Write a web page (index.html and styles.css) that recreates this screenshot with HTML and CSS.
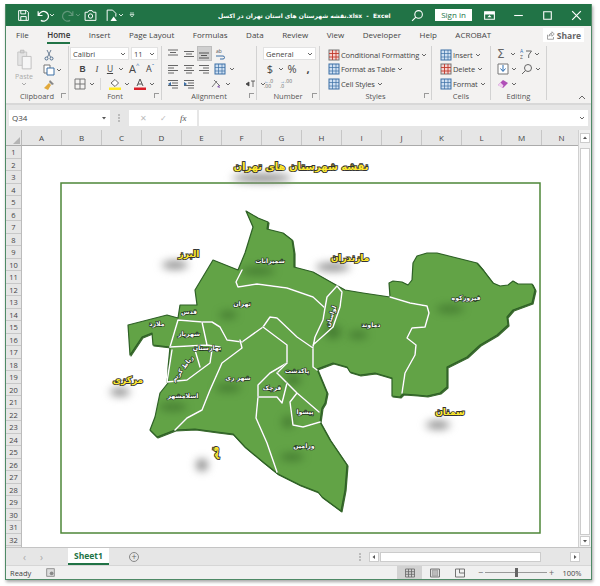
FILE: index.html
```html
<!DOCTYPE html>
<html lang="en">
<head>
<meta charset="utf-8">
<title>Excel</title>
<link rel="stylesheet" href="styles.css">
</head>
<body>
<svg class="defs" width="0" height="0">
  <defs>
    <symbol id="caret" viewBox="0 0 6 6"><path d="M1 2l2 2 2-2" fill="none" stroke="#666" stroke-width="1"/></symbol>
    <symbol id="lines-l" viewBox="0 0 12 12"><path d="M1 2.500h10M1 5h6M1 7.500h10M1 10h6" stroke="#666" fill="none"/></symbol>
    <symbol id="lines-c" viewBox="0 0 12 12"><path d="M1 2.500h10M3 5h6M1 7.500h10M3 10h6" stroke="#666" fill="none"/></symbol>
    <symbol id="lines-r" viewBox="0 0 12 12"><path d="M1 2.500h10M5 5h6M1 7.500h10M5 10h6" stroke="#666" fill="none"/></symbol>
    <symbol id="top" viewBox="0 0 12 12"><path d="M1 2h10M3 4.500h6M1 7h10" stroke="#666" fill="none"/></symbol>
    <symbol id="mid" viewBox="0 0 12 12"><path d="M1 3.500h10M3 6h6M1 8.500h10" stroke="#666" fill="none"/></symbol>
    <symbol id="bot" viewBox="0 0 12 12"><path d="M1 5h10M3 7.500h6M1 10h10" stroke="#555" fill="none"/></symbol>
    <symbol id="table" viewBox="0 0 12 12"><rect x="1" y="1" width="10" height="10" fill="#cfe0f2" stroke="#3a6ea5"/><path d="M1 4.500h10M1 8h10M4.500 1v10M8 1v10" stroke="#3a6ea5" stroke-width=".7"/></symbol>
    <symbol id="cond" viewBox="0 0 12 12"><rect x="1" y="1" width="10" height="10" fill="#f7d3d0" stroke="#777"/><path d="M1 4.500h10M1 8h10M4.500 1v10M8 1v10" stroke="#c0392b" stroke-width=".9"/></symbol>
    <symbol id="brush" viewBox="0 0 12 12"><path d="M7 1l4 4-2 1-3-3z" fill="#888"/><path d="M6 4l2 2-3 5-4-2z" fill="#e2a93b"/></symbol>
  </defs>
</svg>
<div class="window">

  <header class="titlebar">
    <div class="qat">
      <svg class="qi" viewBox="0 0 12 12"><path d="M1.500 1.500h7.500l1.500 1.500v7.500h-9zM3.500 1.500v3h4.500v-3M3.500 10.500v-3.500h5v3.500" fill="none" stroke="#fff" stroke-width=".9"/></svg>
      <svg class="qi undo" viewBox="0 0 12 12"><path d="M2 2v4h4M2.500 6a4.500 4.500 0 1 1 2 4.500" fill="none" stroke="#fff" stroke-width="1.100"/></svg>
      <svg class="cr" viewBox="0 0 6 6"><path d="M1 2l2 2 2-2" fill="none" stroke="#dcebe2"/></svg>
      <svg class="qi redo" viewBox="0 0 12 12"><path d="M10 2v4h-4M9.500 6a4.500 4.500 0 1 0-2 4.500" fill="none" stroke="#5f9779" stroke-width="1.100"/></svg>
      <svg class="cr" viewBox="0 0 6 6"><path d="M1 2l2 2 2-2" fill="none" stroke="#5f9779"/></svg>
      <svg class="qi cam" viewBox="0 0 12 12"><path d="M1 3h2.500l1-1.500h3l1 1.500h2.500v7.500h-10z" fill="none" stroke="#fff" stroke-width=".9"/><circle cx="6" cy="6.500" r="2" fill="none" stroke="#fff" stroke-width=".9"/></svg>
      <svg class="qi doc" viewBox="0 0 12 12"><path d="M2 11v-10h5l3 3v3" fill="none" stroke="#fff" stroke-width=".9"/><path d="M5 11l3-4 3 4z" fill="#fff"/></svg>
      <svg class="cr" viewBox="0 0 6 6"><path d="M1 2l2 2 2-2" fill="none" stroke="#dcebe2"/></svg>
      <svg class="cr custom" viewBox="0 0 6 6"><path d="M1 1h4M1 2.500l2 2.500 2-2.500z" fill="none" stroke="#dcebe2" stroke-width=".8"/></svg>
    </div>
    <div class="doc-title">نقشه شهرستان های استان تهران در اکسل.xlsx&nbsp; - &nbsp;Excel</div>
    <div class="title-right">
      <svg class="qi search" viewBox="0 0 12 12"><circle cx="7" cy="5" r="3.500" fill="none" stroke="#fff"/><path d="M4.500 7.500l-3.500 3.500" stroke="#fff"/></svg>
      <button class="signin">Sign in</button>
      <svg class="qi display" viewBox="0 0 12 12"><path d="M1.500 2.500h9v7h-9z" fill="none" stroke="#fff"/><path d="M1.500 2.500h9v2.500h-9zM6 5.500l-2 2h4z" fill="#fff"/></svg>
      <svg class="qi wb" viewBox="0 0 12 12"><path d="M2 6h8" stroke="#fff"/></svg>
      <svg class="qi wb" viewBox="0 0 12 12"><path d="M2.500 2.500h7v7h-7z" fill="none" stroke="#fff"/></svg>
      <svg class="qi wb" viewBox="0 0 12 12"><path d="M2 2l8 8M10 2l-8 8" stroke="#fff" stroke-width="1.100"/></svg>
    </div>
  </header>

  <nav class="tabs">
    <span class="tab">File</span>
    <span class="tab active">Home</span>
    <span class="tab">Insert</span>
    <span class="tab">Page Layout</span>
    <span class="tab">Formulas</span>
    <span class="tab">Data</span>
    <span class="tab">Review</span>
    <span class="tab">View</span>
    <span class="tab">Developer</span>
    <span class="tab">Help</span>
    <span class="tab">ACROBAT</span>
    <button class="share"><svg class="sh" viewBox="0 0 12 12"><path d="M2 5v6h8v-3M4 7c0-3 2-4 4-4V1l3 3-3 3V5c-2 0-3 .5-4 2z" fill="none" stroke="#777" stroke-width=".9"/></svg>Share</button>
  </nav>

  <section class="ribbon">
    <div class="group g-clip">
      <div class="gbody clip">
        <div class="paste">
          <svg class="paste-ic" viewBox="0 0 18 24"><path d="M2 3h10v15H2z" fill="#e4e4e4" stroke="#c4c4c4"/><path d="M5 1h4v3H5z" fill="#d4d4d4" stroke="#bbb"/><path d="M7 8h10v14H7z" fill="#f6f6f6" stroke="#bbb"/></svg>
          <span class="paste-t">Paste</span>
          <svg class="cr" viewBox="0 0 6 6"><path d="M1 2l2 2 2-2" fill="none" stroke="#aaa"/></svg>
        </div>
        <div class="clip-tools">
          <svg class="ic" viewBox="0 0 12 12"><path d="M4 1l3.500 7M8 1l-3.500 7" stroke="#6b7f96" fill="none"/><circle cx="3.500" cy="9.500" r="1.500" fill="none" stroke="#4d6c8e"/><circle cx="8.500" cy="9.500" r="1.500" fill="none" stroke="#4d6c8e"/></svg>
          <div class="ir"><svg class="ic" viewBox="0 0 12 12"><path d="M1 1h6v8H1z" fill="#fff" stroke="#777"/><path d="M4 4h7v7H4z" fill="#fff" stroke="#3a6ea5"/></svg><svg class="cr" viewBox="0 0 6 6"><use href="#caret"/></svg></div>
          <svg class="ic" viewBox="0 0 12 12"><use href="#brush"/></svg>
        </div>
      </div>
      <div class="glabel">Clipboard</div>
      <span class="launch"></span>
    </div>

    <div class="group g-font">
      <div class="gbody">
        <div class="row r-combos">
          <div class="combo c-font"><span>Calibri</span><svg class="cr" viewBox="0 0 6 6"><use href="#caret"/></svg></div>
          <div class="combo c-size"><span>11</span><svg class="cr" viewBox="0 0 6 6"><use href="#caret"/></svg></div>
        </div>
        <div class="row r-fmt">
          <b class="fb">B</b><i class="fi">I</i><u class="fu">U</u><svg class="cr" viewBox="0 0 6 6"><use href="#caret"/></svg>
          <span class="fa big">A<sup>^</sup></span><span class="fa small">A<sup>ˇ</sup></span>
        </div>
        <div class="row r-col">
          <svg class="ic" viewBox="0 0 12 12"><path d="M1 1h10v10H1zM6 1v10M1 6h10" fill="none" stroke="#777"/></svg><svg class="cr" viewBox="0 0 6 6"><use href="#caret"/></svg>
          <span class="sep"></span>
          <svg class="ic" viewBox="0 0 12 12"><path d="M2 5l4-3.500 3.500 3.500-3.500 3.500z" fill="#fff" stroke="#666"/><rect x="0" y="9.500" width="12" height="2.500" fill="#ffe91f"/></svg><svg class="cr" viewBox="0 0 6 6"><use href="#caret"/></svg>
          <svg class="ic red" viewBox="0 0 12 12"><path d="M3 8l3-7 3 7M4 6h4" fill="none" stroke="#555"/><rect x="0" y="9.500" width="12" height="2.500" fill="#d9202a"/></svg><svg class="cr" viewBox="0 0 6 6"><use href="#caret"/></svg>
        </div>
      </div>
      <div class="glabel">Font</div>
      <span class="launch"></span>
    </div>

    <div class="group g-align">
      <div class="gbody">
        <div class="row r-al">
          <svg class="ic" viewBox="0 0 12 12"><use href="#top"/></svg>
          <svg class="ic" viewBox="0 0 12 12"><use href="#mid"/></svg>
          <span class="sel"><svg class="ic" viewBox="0 0 12 12"><use href="#bot"/></svg></span>
          <svg class="ic" viewBox="0 0 12 12"><text x="2" y="5" class="wrap-a">ab</text><path d="M2 8h7a1.500 1.500 0 0 1 0 3H6" fill="none" stroke="#3a6ea5"/></svg>
        </div>
        <div class="row r-al">
          <svg class="ic" viewBox="0 0 12 12"><use href="#lines-l"/></svg>
          <svg class="ic" viewBox="0 0 12 12"><use href="#lines-c"/></svg>
          <svg class="ic" viewBox="0 0 12 12"><use href="#lines-r"/></svg>
          <svg class="ic" viewBox="0 0 12 12"><use href="#table"/></svg><svg class="cr" viewBox="0 0 6 6"><use href="#caret"/></svg>
        </div>
        <div class="row r-al">
          <svg class="ic" viewBox="0 0 12 12"><use href="#lines-r"/><path d="M4 4L1 6l3 2z" fill="#3a6ea5"/></svg>
          <svg class="ic" viewBox="0 0 12 12"><use href="#lines-r"/><path d="M1 4l3 2-3 2z" fill="#3a6ea5"/></svg>
          <span class="sep"></span>
          <svg class="ic" viewBox="0 0 12 12"><path d="M2 9l5-6M4 2l6 6" stroke="#777" fill="none"/><path d="M7 9l3 1-1-3z" fill="#8a5fb0"/></svg><svg class="cr" viewBox="0 0 6 6"><use href="#caret"/></svg>
          <svg class="ic rtl" viewBox="0 0 12 12"><path d="M6 3h4M8 3v6M4 4L1 6l3 2z" stroke="#444" fill="#444" stroke-width=".8"/></svg><svg class="cr" viewBox="0 0 6 6"><use href="#caret"/></svg>
        </div>
      </div>
      <div class="glabel">Alignment</div>
      <span class="launch"></span>
    </div>

    <div class="group g-num">
      <div class="gbody">
        <div class="row r-combos"><div class="combo c-gen"><span>General</span><svg class="cr" viewBox="0 0 6 6"><use href="#caret"/></svg></div></div>
        <div class="row r-num"><span class="sym">$</span><svg class="cr" viewBox="0 0 6 6"><use href="#caret"/></svg><span class="sym">%</span><span class="sym comma">,</span></div>
        <div class="row r-dec">
          <span class="dec"><em>←</em>.0<br>.00</span>
          <span class="dec"><em>→</em>.00<br>.0</span>
        </div>
      </div>
      <div class="glabel">Number</div>
      <span class="launch"></span>
    </div>

    <div class="group g-styles">
      <div class="gbody list">
        <div class="li"><svg class="ic" viewBox="0 0 12 12"><use href="#cond"/></svg><span>Conditional Formatting</span><svg class="cr" viewBox="0 0 6 6"><use href="#caret"/></svg></div>
        <div class="li"><svg class="ic" viewBox="0 0 12 12"><use href="#table"/></svg><span>Format as Table</span><svg class="cr" viewBox="0 0 6 6"><use href="#caret"/></svg></div>
        <div class="li"><svg class="ic" viewBox="0 0 12 12"><use href="#table"/></svg><span>Cell Styles</span><svg class="cr" viewBox="0 0 6 6"><use href="#caret"/></svg></div>
      </div>
      <div class="glabel">Styles</div>
      <span class="launch"></span>
    </div>

    <div class="group g-cells">
      <div class="gbody list">
        <div class="li"><svg class="ic" viewBox="0 0 12 12"><use href="#table"/></svg><span>Insert</span><svg class="cr" viewBox="0 0 6 6"><use href="#caret"/></svg></div>
        <div class="li"><svg class="ic" viewBox="0 0 12 12"><use href="#cond"/></svg><span>Delete</span><svg class="cr" viewBox="0 0 6 6"><use href="#caret"/></svg></div>
        <div class="li"><svg class="ic" viewBox="0 0 12 12"><use href="#table"/></svg><span>Format</span><svg class="cr" viewBox="0 0 6 6"><use href="#caret"/></svg></div>
      </div>
      <div class="glabel">Cells</div>
    </div>

    <div class="group g-edit">
      <div class="gbody">
        <div class="row r-ed"><span class="sigma">Σ</span><svg class="cr" viewBox="0 0 6 6"><use href="#caret"/></svg>
          <svg class="ic" viewBox="0 0 12 12"><text x="0" y="5" class="az">A</text><text x="0" y="11" class="az z">Z</text><path d="M6 3h5.500L8.700 7v3" fill="none" stroke="#666"/></svg><svg class="cr" viewBox="0 0 6 6"><use href="#caret"/></svg></div>
        <div class="row r-ed"><svg class="ic" viewBox="0 0 12 12"><path d="M1 1h10v10H1z" fill="#fff" stroke="#777"/><path d="M6 2v6M3.500 5.500L6 8.500l2.500-3" fill="none" stroke="#2b6cb0"/></svg><svg class="cr" viewBox="0 0 6 6"><use href="#caret"/></svg>
          <svg class="ic" viewBox="0 0 12 12"><circle cx="7" cy="5" r="3.500" fill="none" stroke="#666"/><path d="M4.500 7.500L1 11" stroke="#666"/></svg><svg class="cr" viewBox="0 0 6 6"><use href="#caret"/></svg></div>
        <div class="row r-ed"><svg class="ic" viewBox="0 0 12 12"><path d="M1 7l5-5 5 3-5 5z" fill="#b04fb8"/><path d="M1 7l2.500-2.500 3 3L5 10z" fill="#f0d0f0"/></svg><svg class="cr" viewBox="0 0 6 6"><use href="#caret"/></svg></div>
      </div>
      <div class="glabel">Editing</div>
    </div>
    <svg class="collapse" viewBox="0 0 8 6"><path d="M1 5l3-3 3 3" fill="none" stroke="#666"/></svg>
  </section>

  <section class="formula">
    <div class="namebox"><span>Q34</span><svg class="cr" viewBox="0 0 6 6"><path d="M1 2h4L3 4.500z" fill="#555"/></svg></div>
    <span class="dots"></span>
    <div class="fxbox"><span class="fx-x">✕</span><span class="fx-v">✓</span><i class="fx">fx</i></div>
    <div class="finput"><svg class="cr" viewBox="0 0 6 6"><use href="#caret"/></svg></div>
  </section>

  <section class="sheet">
    <div class="grid">
      <div class="corner"><span class="tri"></span></div>
      <div class="cols">
        <span>A</span><span>B</span><span>C</span><span>D</span><span>E</span><span>F</span><span>G</span><span>H</span><span>I</span><span>J</span><span>K</span><span>L</span><span>M</span><span>N</span>
      </div>
      <div class="rows">
        <span>1</span><span>2</span><span>3</span><span>4</span><span>5</span><span>6</span><span>7</span><span>8</span><span>9</span><span>10</span><span>11</span><span>12</span><span>13</span><span>14</span><span>15</span><span>16</span><span>17</span><span>18</span><span>19</span><span>20</span><span>21</span><span>22</span><span>23</span><span>24</span><span>25</span><span>26</span><span>27</span><span>28</span><span>29</span><span>30</span><span>31</span><span>32</span>
      </div>
      <svg class="canvas" viewBox="22 146 556 401">
        <rect class="frame" x="61" y="183" width="479" height="350"/>
        <g class="blobs">
          <ellipse cx="262" cy="178" rx="30" ry="4"/>
          <ellipse cx="175" cy="265" rx="13" ry="4"/>
          <ellipse cx="333" cy="267" rx="17" ry="4"/>
          <ellipse cx="120" cy="392" rx="10" ry="4"/>
          <ellipse cx="438" cy="425" rx="12" ry="4"/>
          <ellipse cx="202" cy="465" rx="6" ry="6"/>
        </g>
        <path class="land" d="M246 211L258 218 268 222 267 229 283 233 292 240 294 253 294 267 313 272 336 285 345 290 363 293 390 297 389 283 393 281 402 282 408 285 412 280 413 263 417 256 427 253 437 253 457 258 477 263 483 270 493 283 500 286 508 285 513 281 518 284 532 284 535 290 532 303 513 310 507 317 508 325 497 335 480 345 467 357 447 367 447 387 440 393 427 396 417 395 403 394 400 397 392 396 392 378 375 373 360 375 350 372 347 367 333 363 317 369 327 393 325 403 322 408 320 422 330 440 347 465 345 490 341 511 322 497 318 492 300 485 278 474 263 462 245 447 233 434 217 432 195 429 175 430 157 437 150 430 155 417 160 393 168 383 168 368 170 347 153 345 152 333 142 337 130 355 128 325 167 315 178 318 180 305 197 305 195 290 213 260 238 270 245 253 253 227Z"/>
        <g class="inner-blobs">
          <ellipse cx="258" cy="271" rx="17" ry="4"/>
          <ellipse cx="228" cy="315" rx="9" ry="4"/>
          <ellipse cx="333" cy="332" rx="8" ry="7"/>
          <ellipse cx="358" cy="335" rx="10" ry="4"/>
          <ellipse cx="450" cy="309" rx="14" ry="4"/>
          <ellipse cx="228" cy="388" rx="13" ry="4"/>
          <ellipse cx="173" cy="407" rx="14" ry="4"/>
          <ellipse cx="292" cy="457" rx="12" ry="4"/>
          <ellipse cx="293" cy="380" rx="8" ry="5"/>
          <ellipse cx="288" cy="422" rx="6" ry="6"/>
        </g>
        <g class="borders">
          <path d="M242 270L236 282 238 287 257 284 287 288 313 297 325 308"/>
          <path d="M337 286L327 297 325 308 323 320 315 337 313 347M337 286L342 292 340 307 333 327 313 345"/>
          <path d="M313 347L313 367 317 370"/>
          <path d="M313 348L297 337 277 318 270 317 263 327 242 342"/>
          <path d="M263 327L287 345 287 363 270 373 258 385 258 397 256 418 267 443 277 472"/>
          <path d="M287 363L277 373"/>
          <path d="M277 373L287 383 282 403 277 397 258 397"/>
          <path d="M287 383L297 393 290 402 293 425 303 427 320 422M297 393L319 412"/>
          <path d="M242 342L227 340 220 327 212 322 202 322 178 320 170 347"/>
          <path d="M240 340L242 348 222 363 210 390 202 410 187 418 175 430"/>
          <path d="M170 347L207 345 202 322M207 345L220 347"/>
          <path d="M172 350L167 382 187 380 210 363 212 350M195 350L200 367"/>
          <path d="M390 297L410 303 427 306 429 313 425 327 412 328 407 338 416 345 415 355 405 373 402 393"/>
        </g>
        <g class="wl">
          <text x="270" y="263">شمیرانات</text>
          <text x="242" y="306">تهران</text>
          <text x="157" y="326">ملارد</text>
          <text x="189" y="314">قدس</text>
          <text x="189" y="336">شهریار</text>
          <text x="207" y="350">بهارستان</text>
          <text transform="translate(184 370) rotate(-52)">رباط کریم</text>
          <text x="183" y="398">اسلامشهر</text>
          <text x="238" y="380">شهر ری</text>
          <text x="272" y="390">قرچک</text>
          <text x="297" y="373">پاکدشت</text>
          <text x="305" y="414">پیشوا</text>
          <text x="304" y="448">ورامین</text>
          <text x="371" y="327">دماوند</text>
          <text x="466" y="300">فیروزکوه</text>
          <text transform="translate(333 317) rotate(-72)">لواسان</text>
        </g>
        <g class="yl">
          <text x="301" y="170" class="yt">نقشه شهرستان های تهران</text>
          <text x="189" y="257">البرز</text>
          <text x="350" y="261">مازندران</text>
          <text x="128" y="383">مرکزی</text>
          <text x="450" y="415">سمنان</text>
          <text transform="translate(218 453) rotate(-80)">قم</text>
        </g>
      </svg>
    </div>
    <aside class="vscroll">
      <span class="sb-btn up"><svg class="cr" viewBox="0 0 6 6"><path d="M1 4l2-2.500 2 2.500z" fill="#555"/></svg></span>
      <span class="vthumb"></span>
      <span class="sb-btn dn"><svg class="cr" viewBox="0 0 6 6"><path d="M1 2h4L3 4.500z" fill="#555"/></svg></span>
    </aside>
  </section>

  <section class="sheetbar">
    <span class="nav">‹</span><span class="nav">›</span>
    <div class="sheet-tab">Sheet1</div>
    <span class="addsheet">+</span>
    <span class="dots dots-h"></span>
    <div class="hscroll">
      <span class="sb-btn"><svg class="cr" viewBox="0 0 6 6"><path d="M4 1L1.500 3 4 5z" fill="#555"/></svg></span>
      <span class="hthumb"></span>
      <span class="sb-btn"><svg class="cr" viewBox="0 0 6 6"><path d="M2 1l2.500 2L2 5z" fill="#555"/></svg></span>
    </div>
  </section>

  <footer class="status">
    <span class="ready">Ready</span>
    <svg class="ic macro" viewBox="0 0 12 12"><rect x="1" y="1" width="10" height="10" fill="#ddd" stroke="#777"/><circle cx="7.500" cy="7" r="2.500" fill="#888"/></svg>
    <div class="status-r">
      <span class="view on"><svg class="ic" viewBox="0 0 12 12"><path d="M1.500 2h9v8h-9zM1.500 4.700h9M1.500 7.300h9M4.500 2v8M7.500 2v8" fill="none" stroke="#666" stroke-width=".8"/></svg></span>
      <span class="view"><svg class="ic" viewBox="0 0 12 12"><path d="M1.500 2h9v8h-9z" fill="#ddd" stroke="#777"/><path d="M3.500 3h5v6h-5z" fill="#bbb" stroke="#888" stroke-width=".5"/></svg></span>
      <span class="view"><svg class="ic" viewBox="0 0 12 12"><path d="M1.500 2h9v8h-9zM5.500 2v4h5" fill="none" stroke="#666" stroke-width=".9"/></svg></span>
      <div class="zoom"><span class="zm">−</span><div class="slider"><span class="knob"></span></div><span class="zm">+</span></div>
      <span class="pct">100%</span>
    </div>
  </footer>
</div>
</body>
</html>
```

FILE: styles.css
```css
* { box-sizing: border-box; }
html, body { margin: 0; padding: 0; background: #fff; }
body { font-family: "Open Sans", "Liberation Sans", sans-serif; width: 600px; height: 586px; overflow: hidden; color: #444; }
.defs { position: absolute; }
svg { display: block; flex: none; }
button { font-family: inherit; border: 0; padding: 0; }

.window { width: 587px; height: 576px; margin: 4px 0 0 5px; border: 1px solid #4f8a66; border-top: 0; box-shadow: 1px 2px 3px rgba(0,0,0,.35); display: flex; flex-direction: column; background: #f3f2f1; }
.ic { width: 12px; height: 12px; }
.cr { width: 6px; height: 6px; }

/* title bar */
.titlebar { height: 22px; background: #217346; display: flex; align-items: center; color: #fff; flex: none; }
.qat { display: flex; align-items: center; padding-left: 11px; width: 212px; flex: none; }
.qi { width: 13px; height: 13px; }
.qat .undo { margin-left: 6px; }
.qat .redo { margin-left: 7px; }
.qat .cam { margin-left: 3px; }
.qat .doc { margin-left: 8px; }
.qat .custom { margin-left: 5px; }
.doc-title { font-family: "DejaVu Sans", sans-serif; font-size: 6px; font-weight: 700; white-space: nowrap; width: 188px; flex: none; }
.title-right { display: flex; align-items: center; }
.search { margin-left: 5px; }
.signin { width: 37px; height: 12px; margin-left: 11px; background: #fff; color: #217346; font-size: 8px; line-height: 12px; }
.display { margin-left: 11px; }
.wb { margin-left: 16px; }

/* tabs */
.tabs { height: 18px; display: flex; align-items: center; gap: 18.500px; padding-left: 10px; font-size: 8px; background: #f3f2f1; flex: none; position: relative; }
.tab { line-height: 18px; white-space: nowrap; }
.tab.active { font-weight: 600; box-shadow: inset 0 -2px 0 #217346; color: #333; }
.share { margin-left: auto; margin-right: 7px; width: 41px; height: 14px; background: #fff; color: #666; font-size: 8.500px; font-weight: 700; display: flex; align-items: center; justify-content: center; gap: 2px; }
.sh { width: 9px; height: 9px; }

/* ribbon */
.ribbon { height: 61px; display: flex; background: #f3f2f1; border-bottom: 2px solid #d8d8d8; position: relative; flex: none; font-size: 7.500px; }
.group { border-right: 1px solid #d2d2d2; margin: 2px 0 3px; display: flex; flex-direction: column; position: relative; }
.g-clip { width: 63px; }
.g-font { width: 93px; }
.g-align { width: 95px; }
.g-num { width: 63px; }
.g-styles { width: 112px; }
.g-cells { width: 59px; }
.g-edit { width: 56px; }
.gbody { height: 45px; flex: none; }
.glabel { text-align: center; font-size: 7.500px; line-height: 11px; color: #555; }
.launch { position: absolute; right: 2px; bottom: 2px; width: 5px; height: 5px; border: 1px solid #999; border-width: 1px 0 0 1px; }
.row { height: 15px; display: flex; align-items: center; }

.clip { display: flex; padding: 2px 0 0 8px; }
.paste { width: 20px; display: flex; flex-direction: column; align-items: center; }
.paste-ic { width: 16px; height: 24px; }
.paste-t { font-size: 7px; color: #aaa; line-height: 9px; }
.clip-tools { margin-left: 4px; padding-top: 1px; display: flex; flex-direction: column; gap: 3px; padding-left: 5px; }
.ir { display: flex; align-items: center; gap: 1px; }

.combo { background: #fff; border: 1px solid #e2e2e2; height: 13px; display: flex; align-items: center; justify-content: space-between; padding: 0 2px; font-size: 7.500px; }
.r-combos { gap: 2px; padding-left: 1px; }
.c-font { width: 59px; }
.c-size { width: 27px; }
.c-gen { width: 53px; }
.g-num .r-combos { padding-left: 6px; }
.r-fmt { padding-left: 6px; font-size: 8.500px; }
.fb { width: 15px; text-align: center; font-family: "Liberation Sans", sans-serif; }
.fi { width: 14px; text-align: center; font-family: "Liberation Serif", serif; }
.fu { width: 12px; text-align: center; margin-right: 2px; }
.fa { display: inline-flex; font-family: "Open Sans", sans-serif; }
.fa sup { font-size: 6px; line-height: 8px; color: #2b6cb0; }
.fa.big { font-size: 11px; margin-left: 5px; width: 17px; }
.fa.small { font-size: 9px; }
.r-col { padding-left: 2px; gap: 1px; }
.sep { width: 1px; height: 12px; background: #d8d8d8; margin: 0 4px; }
.r-col .ic { margin-left: 3px; }
.r-col .cr { margin-left: 2px; }
.r-col .red { margin-left: 3px; }

.r-al { padding-left: 5px; gap: 3.500px; }
.sel { width: 15px; height: 15px; background: #cfcfcf; border: 1px solid #bdbdbd; display: flex; align-items: center; justify-content: center; margin: 0 -1.500px; }
.wrap-a { font-size: 5px; fill: #555; font-family: "Open Sans", sans-serif; }
.rtl { margin-left: 10px; }

.r-num { padding-left: 8px; font-size: 11px; gap: 2px; }
.sym { width: 10px; text-align: center; }
.r-num .cr { margin: 0 1px; }
.comma { margin-left: 4px; font-weight: 700; }
.r-dec { padding-left: 7px; gap: 3px; }
.dec { font-size: 5px; line-height: 5px; width: 13px; color: #666; }
.dec em { color: #2b6cb0; font-style: normal; }

.list { padding: 2px 0 0 8px; display: flex; flex-direction: column; }
.li { height: 14.500px; display: flex; align-items: center; gap: 1px; white-space: nowrap; font-size: 7.500px; letter-spacing: -.1px; }
.li .cr { margin-left: 1px; }
.r-ed { padding-left: 6px; gap: 1px; }
.r-ed .ic { margin-right: 1px; }
.sigma { font-size: 12px; width: 12px; line-height: 12px; font-family: "DejaVu Sans", sans-serif; color: #666; }
.r-ed .cr + .ic { margin-left: 3px; }
.az { font-size: 5px; fill: #2b6cb0; font-family: "Open Sans", sans-serif; }
.az.z { fill: #555; }
.collapse { position: absolute; right: 5px; bottom: 3px; width: 8px; height: 6px; }

/* formula bar */
.formula { height: 25px; background: #e6e6e6; display: flex; align-items: center; padding: 0 3px; flex: none; }
.namebox { width: 101px; height: 16px; padding: 0 3px; background: #fff; display: flex; align-items: center; justify-content: space-between; font-size: 8px; }
.dots { width: 2px; height: 8px; margin: 0 8px; border-left: 2px dotted #bbb; }
.fxbox { width: 68px; height: 16px; background: #fff; margin-left: 1px; display: flex; align-items: center; justify-content: space-around; padding: 0 4px; font-size: 8px; color: #bbb; }
.fx { color: #555; font-family: "Liberation Serif", serif; font-size: 9px; }
.finput { flex: 1; margin-left: 2px; height: 16px; background: #fff; display: flex; align-items: center; justify-content: flex-end; padding-right: 3px; }

/* sheet */
.sheet { height: 417px; display: flex; background: #fff; flex: none; }
.grid { width: 572px; height: 417px; display: grid; grid-template-columns: 16px 556px; grid-template-rows: 16px 401px; }
.corner { background: #e6e6e6; border-right: 1px solid #bbb; border-bottom: 1px solid #aaa; position: relative; }
.tri { position: absolute; right: 1px; bottom: 1px; width: 0; height: 0; border-left: 7px solid transparent; border-bottom: 7px solid #b4b4b4; }
.cols { display: grid; grid-template-columns: repeat(14, 40px); background: #e6e6e6; border-bottom: 1px solid #aaa; font-size: 8px; line-height: 15px; text-align: center; }
.cols span { border-right: 1px solid #c6c6c6; }
.rows { display: grid; grid-auto-rows: 12.500px; background: #e6e6e6; border-right: 1px solid #bbb; font-size: 7.500px; line-height: 12px; text-align: center; }
.rows span { border-bottom: 1px solid #c8c8c8; }
.canvas { width: 556px; height: 401px; background: #fff; }
.frame { fill: #fff; stroke: #4e8638; stroke-width: 1.500; }
.blobs ellipse { fill: #888; filter: blur(4px); }
.inner-blobs ellipse { fill: #2f5f22; opacity: .55; filter: blur(4px); }
.land { fill: #62a346; stroke: #2f6127; stroke-width: 1.200; stroke-linejoin: round; filter: drop-shadow(1px 1px 0 #3a6a2e); }
.borders path { fill: none; stroke: #fff; stroke-width: 1.500; stroke-linejoin: round; stroke-linecap: round; filter: drop-shadow(.5px .5px 0 #3f6b32); }
.wl text { font-family: "DejaVu Sans", sans-serif; font-size: 6.200px; font-weight: 700; fill: #fff; stroke: #232; stroke-width: 1.300px; paint-order: stroke; text-anchor: middle; direction: rtl; }
.yl text { font-family: "DejaVu Sans", sans-serif; font-size: 9px; font-weight: 700; fill: #ffe92e; stroke: #333; stroke-width: 1.800px; paint-order: stroke; text-anchor: middle; direction: rtl; }
.yl .yt { font-size: 10px; }

.vscroll { width: 13px; height: 417px; background: #f0f0f0; border-left: 1px solid #d0d0d0; display: flex; flex-direction: column; padding: 1px; }
.sb-btn { width: 10px; height: 10px; background: #fff; border: 1px solid #ccc; display: flex; align-items: center; justify-content: center; flex: none; }
.vthumb { flex: 1; background: #fff; border: 1px solid #ccc; margin: 5px 0 1px; }
.up { margin-top: 2px; }

/* sheet bar */
.sheetbar { height: 18px; background: #e6e6e6; display: flex; align-items: center; border-top: 1px solid #c4c4c4; flex: none; }
.nav { color: #aaa; font-size: 10px; width: 17px; text-align: center; }
.nav:first-child { margin-left: 10px; }
.sheet-tab { width: 41px; height: 17px; margin-left: 18px; background: #fff; color: #217346; font-size: 8.500px; font-weight: 700; text-align: center; line-height: 15px; border-bottom: 2px solid #217346; }
.addsheet { width: 10px; height: 10px; margin-left: 20px; border-radius: 50%; border: 1px solid #888; font-size: 9px; line-height: 7px; text-align: center; color: #666; }
.dots-h { margin: 0 0 0 220px; }
.hscroll { width: 211px; margin-left: 8px; display: flex; gap: 1px; align-items: center; }
.hthumb { width: 164px; height: 10px; background: #fff; border: 1px solid #ccc; margin-right: 28px; }

/* status */
.status { flex: 1; background: #f0f0f0; border-top: 1px solid #d6d6d6; display: flex; align-items: center; font-size: 7.500px; }
.ready { margin-left: 4px; }
.macro { margin-left: 15px; width: 9px; height: 9px; }
.status-r { margin-left: auto; margin-right: 5px; display: flex; align-items: center; height: 100%; }
.view { width: 25px; height: 100%; display: flex; align-items: center; justify-content: center; }
.view.on { background: #d2d2d2; }
.zoom { display: flex; align-items: center; margin-left: 4px; }
.zm { width: 9px; text-align: center; font-size: 9px; color: #666; }
.slider { width: 62px; height: 1px; background: #999; position: relative; }
.knob { position: absolute; left: 30px; top: -4px; width: 3px; height: 9px; background: #666; }
.pct { width: 28px; margin-left: 2px; text-align: center; }
```
